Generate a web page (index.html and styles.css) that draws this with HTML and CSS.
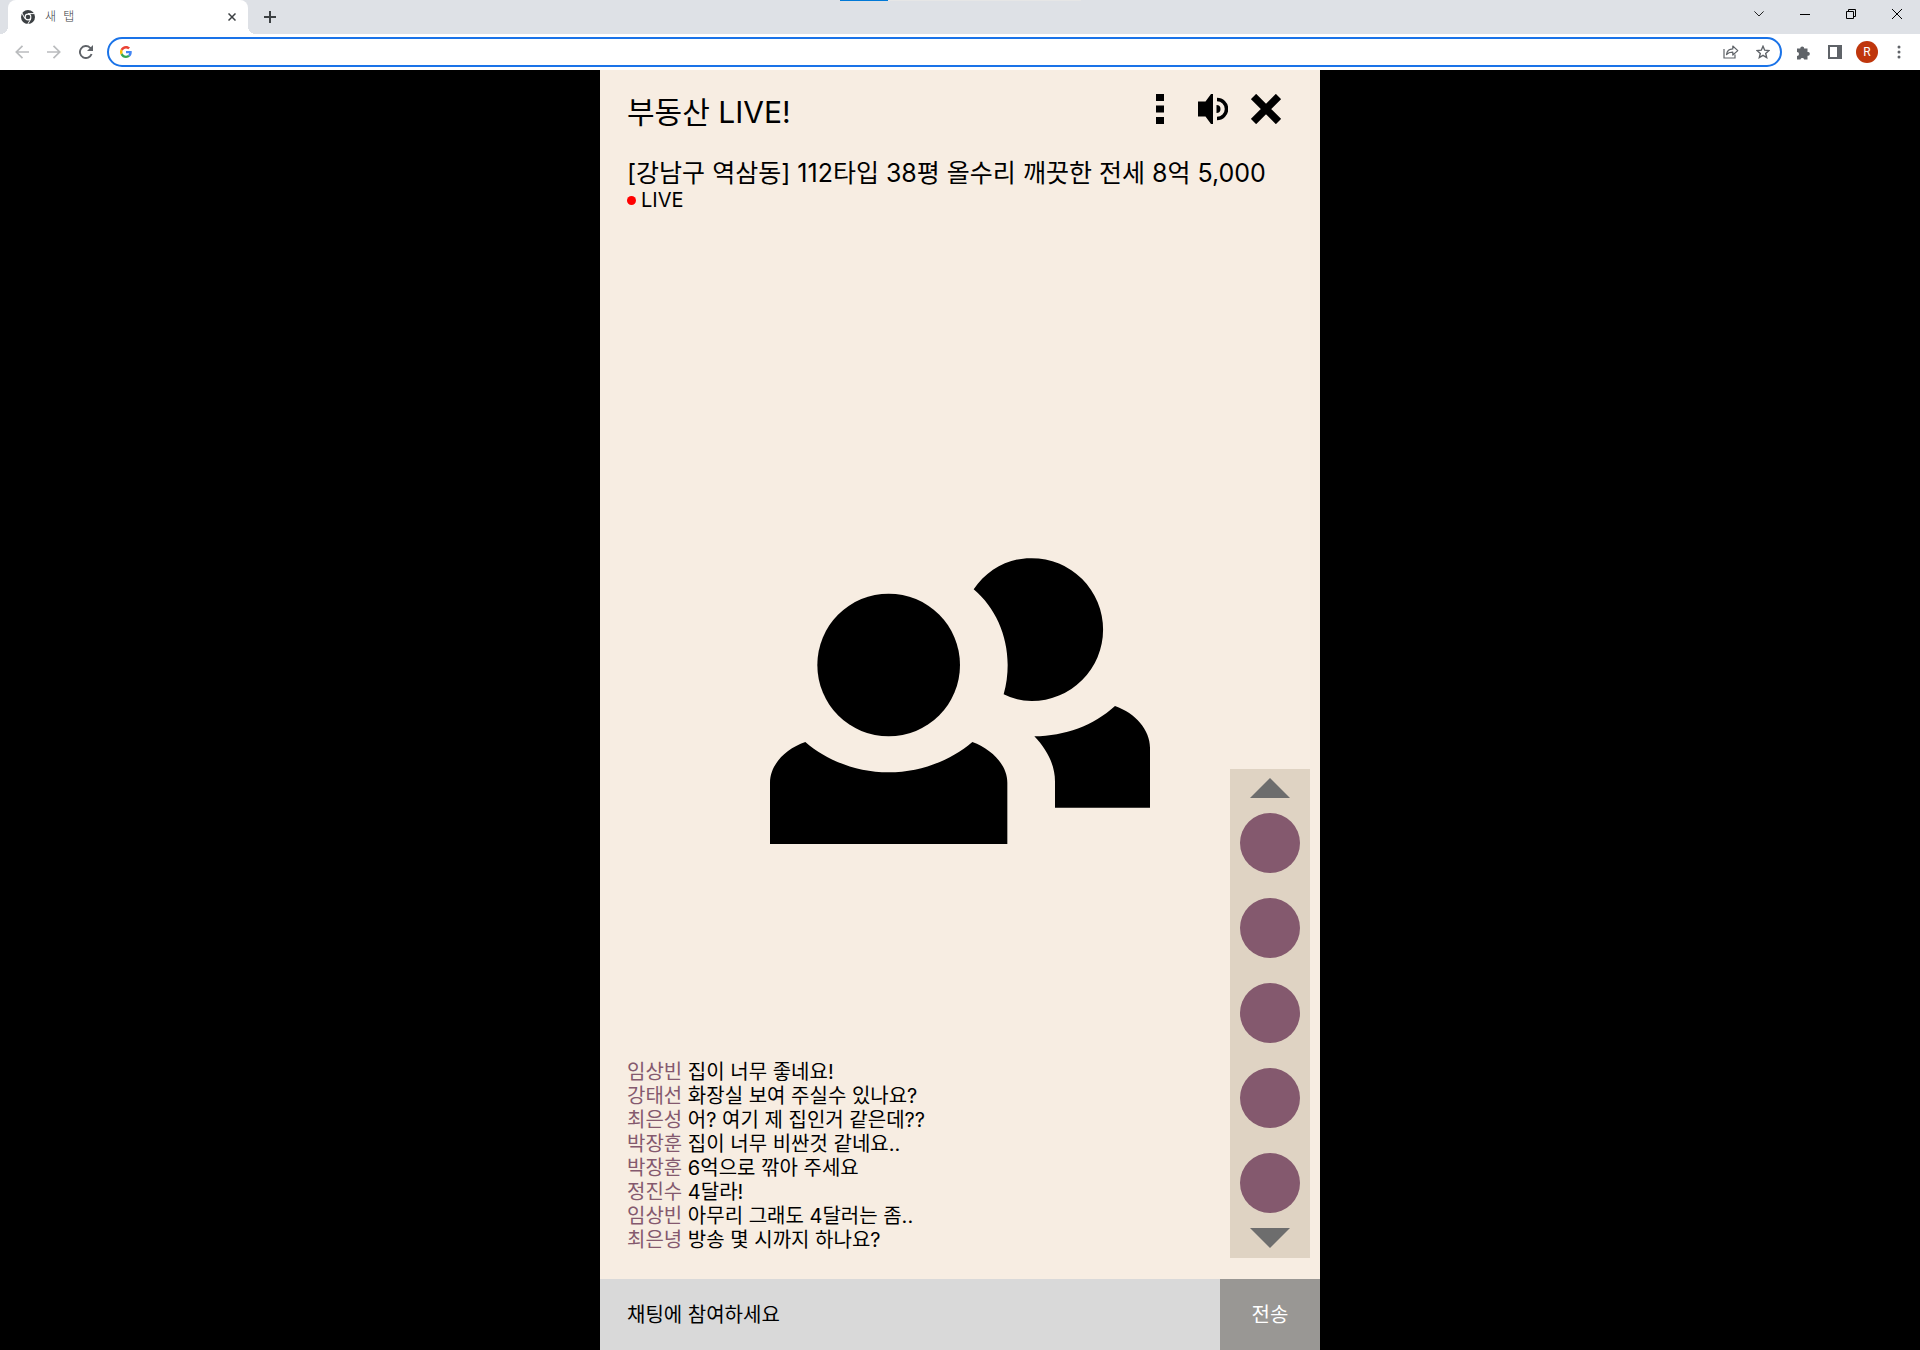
FILE: index.html
```html
<!DOCTYPE html>
<html lang="ko">
<head>
<meta charset="utf-8">
<meta name="viewport" content="width=device-width, initial-scale=1">
<title>부동산 LIVE!</title>
<link rel="stylesheet" href="styles.css">
</head>
<body>
<div class="browser">
  <div class="tab-strip">
    <span class="drag-handle"></span>
    <div class="tab">
      <svg class="tab-icon" viewBox="0 0 14 14" aria-hidden="true"><circle cx="7" cy="7" r="7" fill="#3c4043"/><path d="M7 3.6H13.5M4 8.7L.9 3M9.9 8.8L6.8 14" stroke="#fff" stroke-width="1"/><circle cx="7" cy="7" r="3.4" fill="#fff"/><circle cx="7" cy="7" r="2.3" fill="#3c4043"/></svg>
      <span class="tab-title">새 탭</span>
      <button class="icon-button" aria-label="탭 닫기"><svg width="8" height="8" viewBox="0 0 8 8"><path d="M.5 .5L7.5 7.5M7.5 .5L.5 7.5" stroke="#3c4043" stroke-width="1.5"/></svg></button>
    </div>
    <button class="icon-button new-tab" aria-label="새 탭 열기"><svg width="12" height="12" viewBox="0 0 12 12"><path d="M6 0V12M0 6H12" stroke="#3c4043" stroke-width="2"/></svg></button>
    <div class="window-controls">
      <button class="window-button" aria-label="탭 검색"><svg width="10" height="6" viewBox="0 0 10 6"><path d="M.4 .4L5 5L9.6 .4" fill="none" stroke="#222" stroke-width="1"/></svg></button>
      <button class="window-button" aria-label="최소화"><svg width="10" height="10" viewBox="0 0 10 10"><path d="M0 5.5H10" stroke="#000"/></svg></button>
      <button class="window-button" aria-label="이전 크기로"><svg width="10" height="10" viewBox="0 0 10 10"><path d="M.5 2.5H7.5V9.5H.5ZM2.5 2.5V.5H9.5V7.5H7.5" fill="none" stroke="#000"/></svg></button>
      <button class="window-button" aria-label="닫기"><svg width="10" height="10" viewBox="0 0 10 10"><path d="M0 0L10 10M10 0L0 10" stroke="#000"/></svg></button>
    </div>
  </div>
  <div class="toolbar">
    <div class="navigation">
      <button class="icon-button" aria-label="뒤로"><svg width="14" height="14" viewBox="0 0 14 14"><path d="M14 7H1.5M7.5 .8L1.3 7L7.5 13.2" fill="none" stroke="#babcbe" stroke-width="1.7"/></svg></button>
      <button class="icon-button" aria-label="앞으로"><svg width="14" height="14" viewBox="0 0 14 14"><path d="M0 7H12.5M6.5 .8L12.7 7L6.5 13.2" fill="none" stroke="#babcbe" stroke-width="1.7"/></svg></button>
      <button class="icon-button" aria-label="새로고침"><svg width="14" height="14" viewBox="0 0 14 14"><path d="M12.6 9A6 6 0 1 1 11.2 2.8L12.5 4" fill="none" stroke="#5f6368" stroke-width="1.9"/><path d="M14 0V6H8Z" fill="#5f6368"/></svg></button>
    </div>
    <div class="omnibox">
      <svg width="12" height="12" viewBox="0 0 48 48" aria-hidden="true"><path fill="#ea4335" d="M24 9.5c3.5 0 6.700 1.200 9.200 3.600l6.900-6.900C35.900 2.400 30.500 0 24 0 14.600 0 6.500 5.400 2.600 13.200l8 6.200C12.400 13.700 17.700 9.500 24 9.500z"/><path fill="#4285f4" d="M47 24.600c0-1.600-.2-3.100-.4-4.600H24v9h12.900c-.6 3-2.200 5.500-4.700 7.200l7.700 6C44.400 38 47 32 47 24.600z"/><path fill="#fbbc05" d="M10.500 28.600a14 14 0 0 1 0-9.200l-8-6.200a24 24 0 0 0 0 21.600z"/><path fill="#34a853" d="M24 48c6.500 0 11.900-2.100 15.900-5.800l-7.700-6c-2.200 1.400-4.900 2.300-8.200 2.300-6.300 0-11.600-4.200-13.500-9.900l-8 6.200C6.500 42.600 14.600 48 24 48z"/></svg>
      <input class="address" type="text" aria-label="주소창">
      <button class="icon-button" aria-label="공유"><svg width="16" height="14" viewBox="0 0 16 14"><path d="M1 4V13H12V9.500" fill="none" stroke="#5f6368" stroke-width="1.200"/><path d="M3.500 9.500C4 6 6.500 4 9.800 3.900V1L14.800 5.600L9.800 10V7.100C7 7 5 7.800 3.500 9.500Z" fill="none" stroke="#5f6368" stroke-width="1.200" stroke-linejoin="round"/></svg></button>
      <button class="icon-button" aria-label="북마크"><svg width="14" height="14" viewBox="0 0 14 14"><path d="M7 1.300L8.700 5.200L12.900 5.600L9.700 8.400L10.700 12.600L7 10.400L3.300 12.600L4.300 8.400L1.100 5.600L5.300 5.200Z" fill="none" stroke="#5f6368" stroke-width="1.400"/></svg></button>
    </div>
    <div class="actions">
      <button class="icon-button" aria-label="확장 프로그램"><svg width="15" height="15" viewBox="0 0 15 15"><path d="M1 3.500H4.200A2 2 0 1 1 8.200 3.500H11.500V7A1.900 1.900 0 1 1 11.500 10.700V14.500H8.200A2 2 0 0 0 4.400 14.500H1V11A2 2 0 0 0 1 7Z" fill="#5f6368"/></svg></button>
      <button class="icon-button" aria-label="측면 패널"><svg width="14" height="14" viewBox="0 0 14 14"><path d="M1 1H13V13H1Z" fill="none" stroke="#5f6368" stroke-width="2"/><path d="M9 1H13V13H9Z" fill="#5f6368"/></svg></button>
      <button class="avatar" aria-label="프로필">R</button>
      <button class="icon-button" aria-label="메뉴"><svg width="4" height="14" viewBox="0 0 4 14" fill="#5f6368"><circle cx="2" cy="2" r="1.500"/><circle cx="2" cy="7" r="1.500"/><circle cx="2" cy="12" r="1.500"/></svg></button>
    </div>
  </div>
</div>

<main class="live">
  <header class="live-header">
    <h1 class="live-title">부동산 LIVE!</h1>
    <div class="live-actions">
      <button class="live-button" aria-label="더보기"><svg width="8" height="30" viewBox="0 0 8 30"><path d="M0 0H8V7H0ZM0 11.500H8V18.500H0ZM0 23H8V30H0Z"/></svg></button>
      <button class="live-button" aria-label="소리"><svg width="30" height="30" viewBox="0 0 30 30"><path d="M15 0V30H13L7.500 22.500H0V7.500H7.500L13 0Z"/><path d="M18.500 11A4 4 0 0 1 18.500 19Z"/><path d="M19 5.500A9.500 9.500 0 0 1 19 24.500" fill="none" stroke="#000" stroke-width="3.500"/></svg></button>
      <button class="live-button" aria-label="방송 닫기"><svg width="30" height="30" viewBox="0 0 30 30"><path d="M2.500 2.500L27.500 27.500M27.500 2.500L2.500 27.500" stroke="#000" stroke-width="7.500"/></svg></button>
    </div>
  </header>
  <h2 class="listing">[강남구 역삼동] 112타입 38평 올수리 깨끗한 전세 8억 5,000</h2>
  <p class="live-status">LIVE</p>

  <section class="stage">
    <svg class="people" viewBox="90 84 1140 858" role="img" aria-label="방송 참여자">
      <circle cx="446" cy="405" r="214"/>
      <path d="M701 178C740 121 804 83 875 84.500A214 214 0 1 1 875 513Q830 513 791 493Q803 450 803 405C803 315 765 232 701 178Z"/>
      <path d="M90 942V758C90 705 135 657 196 636C262 693 352 727 446 727S630 693 697 636C757 658 802 706 802 758V942Z"/>
      <path d="M883 619C975 618 1060 587 1125 528C1187 550 1230 600 1230 653V833H945V755C945 705 922 660 883 619Z"/>
    </svg>
    <div class="overlay">
      <ul class="chat">
        <li><span class="name">임상빈</span> 집이 너무 좋네요!</li>
        <li><span class="name">강태선</span> 화장실 보여 주실수 있나요?</li>
        <li><span class="name">최은성</span> 어? 여기 제 집인거 같은데??</li>
        <li><span class="name">박장훈</span> 집이 너무 비싼것 같네요..</li>
        <li><span class="name">박장훈</span> 6억으로 깎아 주세요</li>
        <li><span class="name">정진수</span> 4달라!</li>
        <li><span class="name">임상빈</span> 아무리 그래도 4달러는 좀..</li>
        <li><span class="name">최은녕</span> 방송 몇 시까지 하나요?</li>
      </ul>
      <div class="rail">
        <button class="rail-arrow" aria-label="위로"><svg width="40" height="20" viewBox="0 0 40 20"><path d="M20 0L40 20H0Z"/></svg></button>
        <div class="rail-list">
          <button class="rail-item" aria-label="항목 1"></button>
          <button class="rail-item" aria-label="항목 2"></button>
          <button class="rail-item" aria-label="항목 3"></button>
          <button class="rail-item" aria-label="항목 4"></button>
          <button class="rail-item" aria-label="항목 5"></button>
        </div>
        <button class="rail-arrow" aria-label="아래로"><svg width="40" height="20" viewBox="0 0 40 20"><path d="M20 20L0 0H40Z"/></svg></button>
      </div>
    </div>
  </section>

  <form class="composer">
    <input class="message" type="text" placeholder="채팅에 참여하세요" aria-label="채팅 메시지">
    <button class="send" type="button">전송</button>
  </form>
</main>
</body>
</html>
```
FILE: styles.css
```css
* {
  box-sizing: border-box;
}

body {
  margin: 0;
  min-height: 100vh;
  display: flex;
  flex-direction: column;
  background: #000;
  color: #000;
  font-family: Inter, "Noto Sans CJK KR", sans-serif;
  font-size: 20px;
  line-height: 24px;
}

button,
input {
  margin: 0;
  padding: 0;
  border: 0;
  background: none;
  color: inherit;
  font: inherit;
}

svg {
  display: block;
  flex: none;
}

/* Browser frame */
.tab-strip {
  position: relative;
  display: flex;
  height: 34px;
  padding-left: 8px;
  background: #dee1e6;
}

.drag-handle {
  position: absolute;
  top: 0;
  left: 43.75%;
  width: 241px;
  height: 1px;
  background: linear-gradient(to right, #0078d7 48px, #e6e6e6 48px);
}

.tab {
  position: relative;
  display: flex;
  align-items: center;
  gap: 10px;
  width: 240px;
  padding: 0 8px 0 13px;
  border-radius: 8px 8px 0 0;
  background: #fff;
}

.tab::before,
.tab::after {
  content: "";
  position: absolute;
  bottom: 0;
  width: 8px;
  height: 8px;
}

.tab::before {
  right: 100%;
  background: radial-gradient(circle at 0 0, #dee1e6 8px, #fff 8px);
}

.tab::after {
  left: 100%;
  background: radial-gradient(circle at 100% 0, #dee1e6 8px, #fff 8px);
}

.tab-icon {
  width: 14px;
  height: 14px;
}

.tab-title {
  flex: 1;
  color: #3c4043;
  font-family: "DejaVu Sans Mono", "Noto Sans CJK KR", monospace;
  font-size: 12px;
  font-weight: 300;
  line-height: 16px;
}

.icon-button {
  display: grid;
  place-items: center;
  flex: none;
  width: 16px;
  height: 16px;
}

.new-tab {
  align-self: center;
  margin-left: 14px;
}

.window-controls {
  display: flex;
  height: 28px;
  margin-left: auto;
}

.window-button {
  display: grid;
  place-items: center;
  width: 46px;
}

.toolbar {
  display: flex;
  align-items: center;
  gap: 13px;
  height: 36px;
  padding: 0 13px 0 14px;
  background: #fff;
}

.navigation,
.actions {
  display: flex;
  align-items: center;
  gap: 16px;
}

.omnibox {
  flex: 1;
  display: flex;
  align-items: center;
  gap: 16px;
  height: 30px;
  padding: 0 9px 0 11px;
  border: 2px solid #1a73e8;
  border-radius: 15px;
}

.address {
  flex: 1;
  min-width: 0;
  font-size: 14px;
  outline: 0;
}

.avatar {
  width: 22px;
  height: 22px;
  margin: 0 -3px;
  border-radius: 50%;
  background: #bf360c;
  color: #fff;
  font-family: Roboto, sans-serif;
  font-size: 12px;
  line-height: 22px;
  text-align: center;
}

/* Live broadcast */
.live {
  flex: 1;
  display: flex;
  flex-direction: column;
  width: 100%;
  max-width: 720px;
  margin: 0 auto;
  background: #f7ede2;
}

.live-header {
  display: flex;
  justify-content: space-between;
  padding: 24px 39px 0 27px;
}

.live-title {
  margin: 0;
  font-size: 30px;
  font-weight: 400;
  line-height: 36px;
}

.live-actions {
  display: flex;
  gap: 23px;
}

.live-button {
  height: 30px;
}

.live-button:first-child {
  margin-right: 11px;
}

.listing {
  margin: 28px 27px 0;
  font-size: 25px;
  font-weight: 400;
  line-height: 30px;
}

.live-status {
  display: flex;
  align-items: center;
  gap: 5px;
  margin: 0 27px;
}

.live-status::before {
  content: "";
  width: 9px;
  height: 9px;
  border-radius: 50%;
  background: #f00;
}

.stage {
  flex: 1;
  display: grid;
}

.people {
  grid-area: 1 / 1;
  place-self: center;
  width: 380px;
  max-width: 60%;
  margin-bottom: 90px;
}

.overlay {
  grid-area: 1 / 1;
  align-self: end;
  display: flex;
  justify-content: space-between;
  align-items: flex-end;
  padding: 0 10px 21px 27px;
}

.chat {
  margin: 0;
  padding: 0 0 6px;
  list-style: none;
}

.name {
  color: #84596e;
}

.rail {
  display: flex;
  flex-direction: column;
  align-items: center;
  gap: 15px;
  width: 80px;
  padding: 9px 0 10px;
  background: #dfd3c3;
}

.rail-arrow {
  height: 20px;
}

.rail-arrow svg {
  fill: #6d6d6d;
}

.rail-list {
  display: flex;
  flex-direction: column;
  gap: 25px;
}

.rail-item {
  width: 60px;
  height: 60px;
  border-radius: 50%;
  background: #84596e;
}

.composer {
  display: flex;
  height: 71px;
}

.message {
  flex: 1;
  min-width: 0;
  padding: 0 27px;
  background: #d9d9d9;
}

.message::placeholder {
  color: #000;
  opacity: 1;
}

.send {
  width: 100px;
  background: #999794;
  color: #fff;
}
```
